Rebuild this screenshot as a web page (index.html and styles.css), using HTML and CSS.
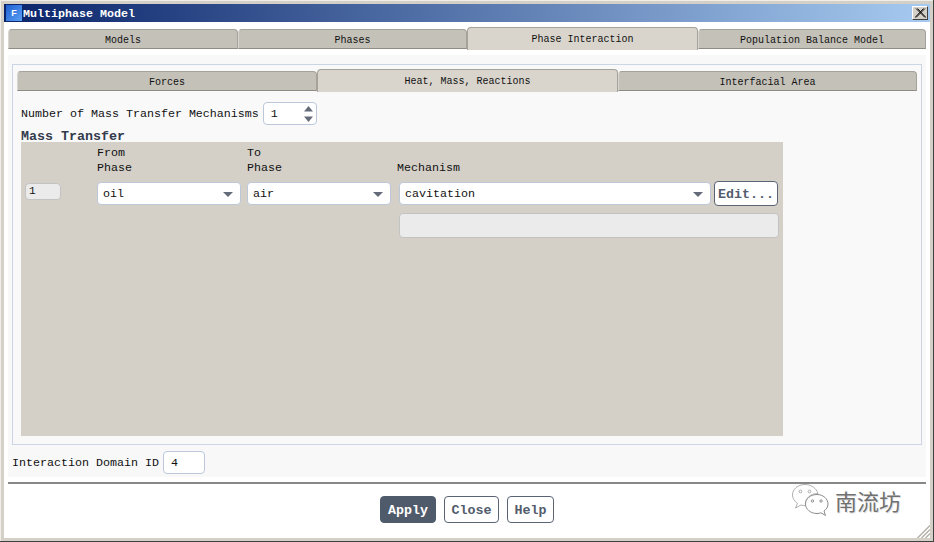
FILE: index.html
```html
<!DOCTYPE html>
<html lang="en">
<head>
<meta charset="utf-8">
<title>Multiphase Model</title>
<link rel="stylesheet" href="styles.css">
</head>
<body>
<div class="window">
  <div class="client">
    <header class="titlebar">
      <span class="app-icon">F</span>
      <span class="title">Multiphase Model</span>
      <span class="close"><svg width="11" height="10" viewBox="0 0 11 10"><path d="M1 0.5 L10 9.5 M2.5 0.5 L11 9.5 M10 0.5 L1 9.5 M8.5 0.5 L0 9.5" stroke="#111" stroke-width="1" fill="none"/></svg></span>
    </header>
    <main class="main">
      <nav class="tabs tabs-outer">
        <div class="tab">Models</div>
        <div class="tab">Phases</div>
        <div class="tab active">Phase Interaction</div>
        <div class="tab">Population Balance Model</div>
      </nav>
      <section class="panel">
        <div class="frame">
          <nav class="tabs tabs-inner">
            <div class="tab">Forces</div>
            <div class="tab active">Heat, Mass, Reactions</div>
            <div class="tab">Interfacial Area</div>
          </nav>
          <div class="content">
            <div class="field-row count-row">
              <label>Number of Mass Transfer Mechanisms</label>
              <div class="input spin">
                <span>1</span>
                <span class="arrows">
                  <svg width="9" height="6" viewBox="0 0 9 6"><path d="M4.5 0 L9 5.5 L0 5.5 Z" fill="#646b78"/></svg>
                  <svg width="9" height="6" viewBox="0 0 9 6"><path d="M0 0.5 L9 0.5 L4.5 6 Z" fill="#646b78"/></svg>
                </span>
              </div>
            </div>
            <h2 class="heading">Mass Transfer</h2>
            <div class="table">
              <div class="table-head">
                <div></div>
                <div>From<br>Phase</div>
                <div>To<br>Phase</div>
                <div>Mechanism</div>
              </div>
              <div class="table-row">
                <div class="index">1</div>
                <div class="select select-from"><span>oil</span><svg width="10" height="5" viewBox="0 0 10 5"><path d="M0 0 H10 L5 5 Z" fill="#646b78"/></svg></div>
                <div class="select select-to"><span>air</span><svg width="10" height="5" viewBox="0 0 10 5"><path d="M0 0 H10 L5 5 Z" fill="#646b78"/></svg></div>
                <div class="mechanism">
                  <div class="mech-line">
                    <div class="select select-wide"><span>cavitation</span><svg width="10" height="5" viewBox="0 0 10 5"><path d="M0 0 H10 L5 5 Z" fill="#646b78"/></svg></div>
                    <button class="btn btn-edit">Edit...</button>
                  </div>
                  <div class="blank"></div>
                </div>
              </div>
            </div>
          </div>
        </div>
        <div class="field-row domain-row">
          <label>Interaction Domain ID</label>
          <div class="input domain"><span>4</span></div>
        </div>
      </section>
      <div class="rule"></div>
      <footer class="actions">
        <button class="btn btn-primary">Apply</button>
        <button class="btn btn-close">Close</button>
        <button class="btn btn-help">Help</button>
      </footer>
    </main>
  </div>
  <div class="watermark">
    <svg width="38" height="34" viewBox="0 0 38 34">
      <path d="M14 1.5 C6.5 1.5 1.5 6.5 1.5 12 C1.5 15.5 3.5 18.2 6.5 20.2 L4.5 25 L10 22 C11.5 22.5 13 22.7 14.5 22.6 C13.5 16 19 10.5 27 10.5 C25.5 5.5 20.5 1.5 14 1.5 Z" fill="#fff" stroke="#b0b0b0"/>
      <path d="M26 11.5 C19.5 11.5 14.5 15.8 14.5 21 C14.5 26.2 19.5 30.5 26 30.5 C27.5 30.5 29 30.2 30 29.8 L34.5 32.5 L33 28 C35.5 26.2 37 23.8 37 21 C37 15.8 32 11.5 26 11.5 Z" fill="#fff" stroke="#8a8a8a"/>
      <circle cx="9.5" cy="8.5" r="1.4" fill="none" stroke="#999" stroke-width=".8"/>
      <circle cx="18.5" cy="8.5" r="1.4" fill="none" stroke="#999" stroke-width=".8"/>
      <circle cx="21.5" cy="18" r="1.2" fill="none" stroke="#777" stroke-width=".8"/>
      <circle cx="30" cy="18" r="1.2" fill="none" stroke="#777" stroke-width=".8"/>
    </svg>
    <span class="wm-text">南流坊</span>
  </div>
  <svg class="grip" width="13" height="13" viewBox="0 0 13 13"><path d="M13 0.5 L0.5 13 M13 4.5 L4.5 13 M13 8.5 L8.5 13" stroke="#b4b0a8" stroke-width="1.4" fill="none"/></svg>
</div>
</body>
</html>
```
FILE: styles.css
```css
* { box-sizing: border-box; }
html, body { margin: 0; padding: 0; }
body {
  width: 934px;
  height: 542px;
  overflow: hidden;
  background: #fff;
  font-family: "Liberation Mono", "DejaVu Sans Mono", monospace;
  font-size: 11.67px;
  color: #111;
}
.window {
  position: relative;
  width: 934px;
  height: 542px;
  padding: 4px;
  background: #d4d0c8;
  box-shadow: inset -1px -1px 0 #404040, inset 1px 1px 0 #f0eee9;
}
.client {
  height: 534px;
  background: #fff;
}
.titlebar {
  display: flex;
  align-items: center;
  height: 18px;
  background: linear-gradient(90deg, #0a246a 0%, #a6caf0 100%);
  color: #fff;
}
.app-icon {
  width: 16px;
  height: 16px;
  margin-left: 2px;
  background: linear-gradient(135deg, #1f5fd0, #5aa0f5);
  color: #fff;
  font: bold 9px/16px "Liberation Sans", sans-serif;
  text-align: center;
}
.title {
  margin-left: 1px;
  padding-top: 1px;
  font-weight: bold;
}
.close {
  display: flex;
  align-items: center;
  justify-content: center;
  width: 16px;
  height: 14px;
  margin-left: auto;
  margin-right: 2px;
  background: #d4d0c8;
  border: 1px solid;
  border-color: #fff #404040 #404040 #fff;
}
.main { padding: 0 4px; }
.tabs { display: grid; height: 20px; }
.tabs-outer { grid-template-columns: 230px 229px 231px 228px; margin-top: 7px; }
.tabs-inner { grid-template-columns: 300px 301px 299px; }
.tab {
  display: flex;
  align-items: center;
  justify-content: center;
  padding-top: 2px;
  font-size: 10px;
  background: #c4c1b9;
  border: 1px solid #a5a29b;
  border-left-color: #d8d6d0;
  border-bottom: 1px solid #8f8c86;
  border-radius: 4px 4px 0 0;
}
.tab.active {
  position: relative;
  margin: -2px 0 -1px;
  padding-top: 0;
  background: #d9d5cd;
  border-color: #a5a29b;
  border-bottom: 0;
  z-index: 1;
}
.panel {
  height: 422px;
  margin-top: 6px;
  padding: 9px 4px 0;
  background: #f8f8f9;
}
.frame {
  height: 381px;
  padding: 6px 4px 0;
  background: #f9f9fa;
  border: 1px solid #ccd5e5;
}
.content { padding: 0 4px; }
.field-row { display: flex; align-items: center; height: 23px; gap: 4px; }
.count-row { margin-top: 11px; }
.domain-row { margin-top: 6px; }
.input {
  display: flex;
  align-items: center;
  height: 23px;
  padding-left: 7px;
  background: #fff;
  border: 1px solid #bcc8da;
  border-radius: 4px;
}
.spin { width: 54px; justify-content: space-between; padding-right: 3px; }
.arrows { display: flex; flex-direction: column; gap: 4px; }
.arrows svg { display: block; }
.domain { width: 42px; }
.heading {
  margin: 3px 0 0;
  height: 14px;
  font-size: 13.33px;
  line-height: 17px;
  font-weight: bold;
  color: #333b4c;
}
.table {
  width: 762px;
  height: 294px;
  padding-top: 4px;
  background: #d4d0c8;
}
.table-head {
  display: grid;
  grid-template-columns: 76px 150px 150px 1fr;
  align-items: end;
  height: 30px;
  line-height: 15px;
}
.table-row {
  display: flex;
  align-items: flex-start;
  margin-top: 6px;
  margin-left: 4px;
}
.index {
  width: 36px;
  height: 17px;
  margin-top: 1px;
  padding-left: 3px;
  font-size: 11px;
  line-height: 15px;
  background: #ebebeb;
  border: 1px solid #c3c3c3;
  border-radius: 4px;
}
.select {
  display: flex;
  align-items: center;
  justify-content: space-between;
  flex: none;
  height: 23px;
  padding: 1px 7px 0 5px;
  background: #fff;
  border: 1px solid #bcc8da;
  border-radius: 4px;
}
.select-from { width: 144px; margin-left: 36px; }
.select-to { width: 144px; margin-left: 6px; }
.mechanism { width: 380px; margin-left: 8px; }
.mech-line { display: flex; align-items: center; gap: 3px; margin-top: -1px; height: 25px; }
.select-wide { width: 312px; }
.btn {
  font-family: inherit;
  font-weight: bold;
  font-size: 13.33px;
  color: #525c6c;
  background: #fff;
  border: 1px solid #5a6474;
  border-radius: 4px;
  padding: 1px 0 0;
  height: 27px;
}
.btn-edit { width: 64px; height: 25px; flex: none; }
.blank {
  height: 25px;
  margin-top: 7px;
  background: #ebebeb;
  border: 1px solid #c3c3c3;
  border-radius: 4px;
}
.rule { height: 2px; margin-top: 5px; background: #888; }
.actions { display: flex; justify-content: center; gap: 8px; margin-top: 12px; }
.btn-primary { width: 56px; background: #4f5a6b; color: #fff; border-color: #4f5a6b; }
.btn-close { width: 55px; }
.btn-help { width: 47px; }
.watermark {
  position: absolute;
  left: 791px;
  top: 483px;
  display: flex;
  align-items: center;
  gap: 6px;
}
.wm-text {
  font-family: "Noto Sans CJK SC", sans-serif;
  font-size: 22px;
  line-height: 30px;
  color: #707070;
  text-shadow: 1px 1px 0 #e4e4e4;
}
.grip { position: absolute; right: 4px; bottom: 4px; }
```
